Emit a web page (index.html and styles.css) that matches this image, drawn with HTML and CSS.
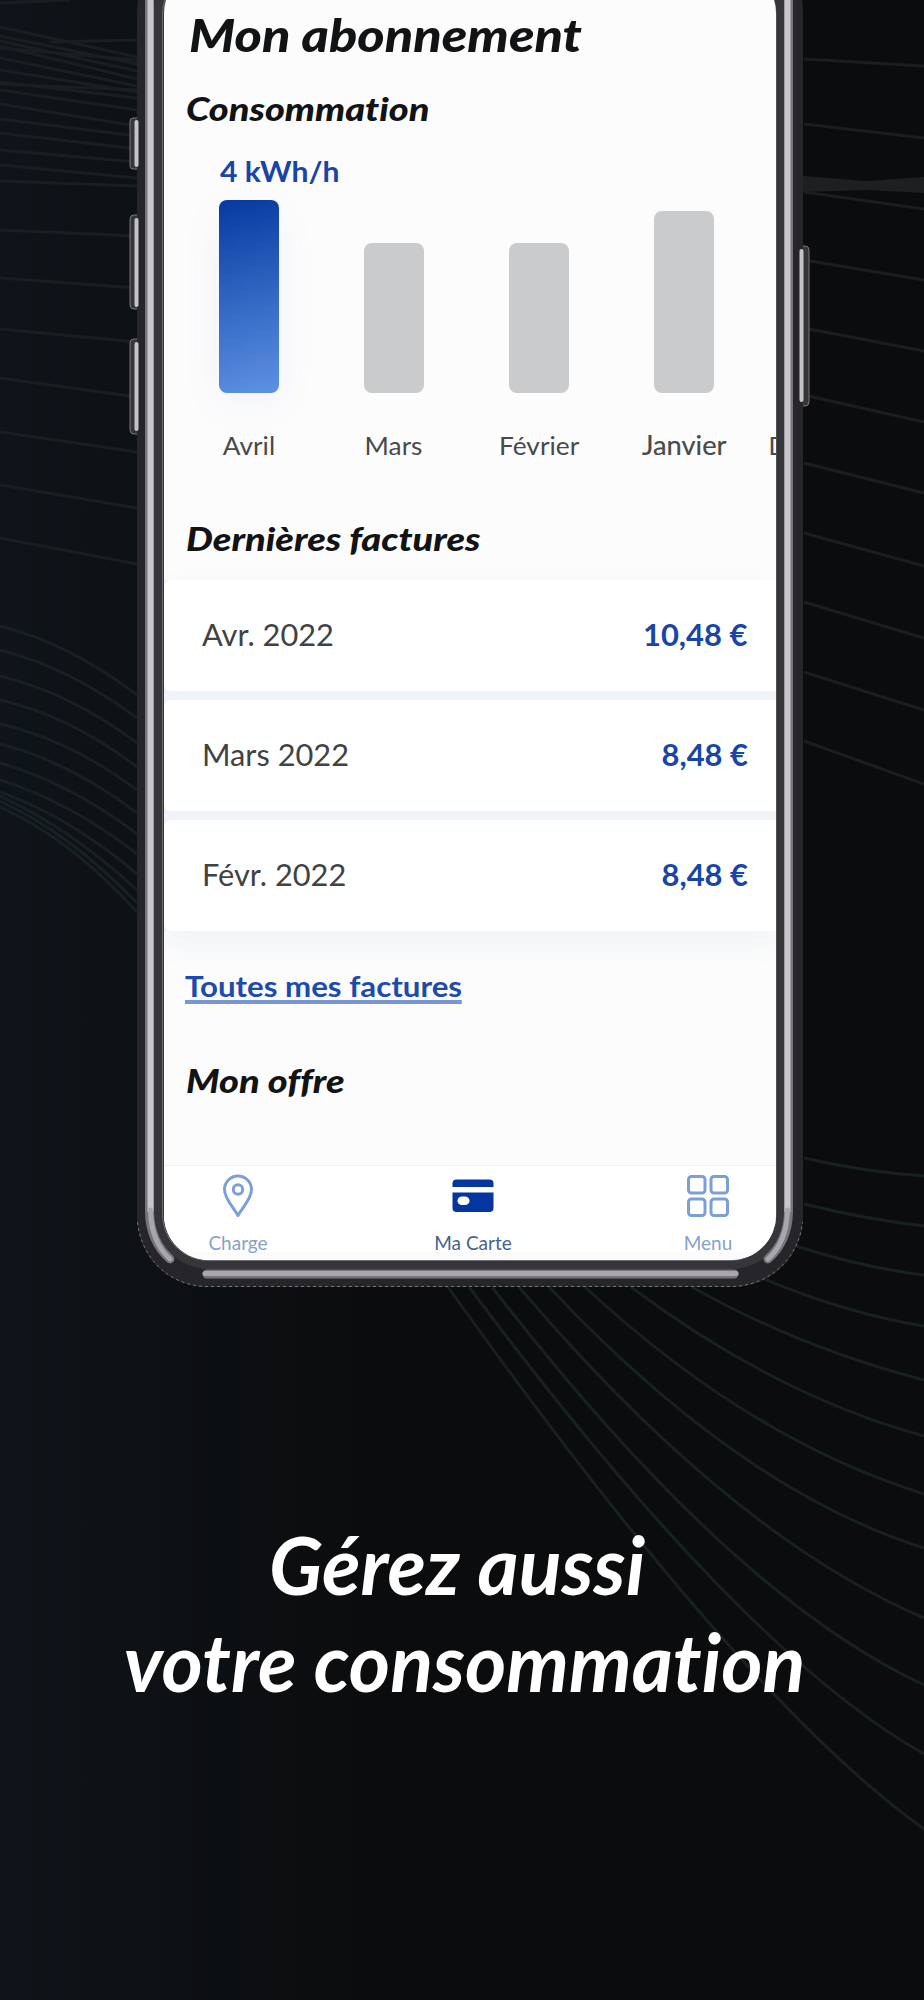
FILE: index.html
```html
<!DOCTYPE html>
<html lang="fr">
<head>
<meta charset="utf-8">
<title>Mon abonnement</title>
<link rel="stylesheet" href="styles.css">
</head>
<body>
<main class="poster">
  <svg class="waves" viewBox="0 0 924 2000" aria-hidden="true">
    <g class="wave-dim">
      <path d="M0 3L70 0M0 27L137 57M0 36L137 64M0 41L137 71M0 46L137 79M0 58L137 86M0 70L137 92M0 82L137 98M0 90L137 110M0 104L137 126M0 119L137 136M0 133L137 149M0 150L137 162M0 165L137 178M0 181L137 186M50 42L137 40M0 84L137 90M0 48L137 60"/>
      <path d="M0 230L137 236M0 278L137 288M0 329L137 342M0 378L137 397M0 432L137 452M0 485L137 508M0 538L137 564"/>
      <path d="M804 59L924 66M804 124L924 138M804 192L924 209M804 260L924 280M804 328L924 351M804 395L924 422M804 463L924 493M804 533L924 566M804 602L924 638M804 672L924 710M804 741L924 784"/>
    </g>
    <path class="wave-band" d="M803 176L867 181L924 177V193L867 190L803 192Z"/>
    <g class="wave-teal">
      <path d="M0 626Q70 644 137 695M0 650Q70 668 137 718M0 676Q70 693 137 743M0 700Q70 716 137 767M0 724Q70 740 137 790M0 744Q70 762 137 813M0 763Q70 783 137 834M0 780Q70 802 137 854M0 792Q70 817 137 874M0 796Q70 828 137 890M0 801Q70 833 137 903M0 807Q70 838 137 912"/>
      <path d="M804 1158Q864 1172 924 1176M804 1204Q864 1219 924 1226M796 1246Q864 1268 924 1275M755 1275Q840 1312 924 1326M692 1287Q800 1348 924 1380M631 1287Q775 1395 924 1436M585 1287Q750 1440 924 1494M549 1287Q740 1490 924 1548M519 1287Q730 1535 924 1618M492 1287Q730 1595 924 1685M469 1287Q740 1650 924 1754M448 1287Q742 1699 924 1829"/>
    </g>
  </svg>

  <section class="phone">
    <svg class="frame" viewBox="125 -59 690 1348" aria-hidden="true">
      <g class="side-key">
        <rect x="130" y="118" width="11" height="51" rx="3"/>
        <rect x="130" y="215" width="11" height="94" rx="4"/>
        <rect x="130" y="339" width="11" height="95" rx="4"/>
        <rect x="799" y="246" width="10" height="160" rx="4"/>
      </g>
      <rect class="body-edge" x="137" y="-59" width="666" height="1346" rx="70"/>
      <rect class="body-inner" x="153" y="-42" width="634" height="1311" rx="56"/>
      <g class="glint">
        <path d="M149.500 -10V1212C150 1236 160 1250 170 1259"/>
        <path d="M788.500 -10V1212C788 1236 778 1250 768 1259"/>
        <path d="M207 1274H734"/>
      </g>
      <g class="glint-core">
        <path d="M150.500 -10V1212"/>
        <path d="M787.500 -10V1212"/>
      </g>
      <path class="glint-tail" d="M150.500 1210C151 1236 160 1250 170 1259M787.500 1210C787 1236 778 1250 768 1259M205 1273.500H736"/>
      <path class="key-glint" d="M136.500 122V165M136.500 220V305M136.500 344V429M801.500 251V400"/>
      <path class="rim" d="M137.500 1222C141 1256 166 1284 204 1286.500H734C773 1284 799 1256 802.500 1222"/>
      <rect class="lip" x="162.500" y="-32" width="613.500" height="1292.500" rx="46"/>
    </svg>

    <div class="screen">
      <h1 class="title">Mon abonnement</h1>
      <h2 class="subtitle">Consommation</h2>

      <div class="chart">
        <div class="month current"><span class="value">4 kWh/h</span><i class="bar" style="height:193px"></i><span class="label">Avril</span></div>
        <div class="month"><i class="bar" style="height:150px"></i><span class="label">Mars</span></div>
        <div class="month"><i class="bar" style="height:150px"></i><span class="label">Février</span></div>
        <div class="month"><i class="bar" style="height:182px"></i><span class="label strong">Janvier</span></div>
        <div class="month cut"><span class="label">D</span></div>
      </div>

      <h2 class="subtitle">Dernières factures</h2>
      <ul class="bills">
        <li class="bill"><span class="date">Avr. 2022</span><b class="amount">10,48 €</b></li>
        <li class="bill"><span class="date">Mars 2022</span><b class="amount">8,48 €</b></li>
        <li class="bill"><span class="date">Févr. 2022</span><b class="amount">8,48 €</b></li>
      </ul>
      <a class="all-bills">Toutes mes factures</a>
      <h2 class="subtitle">Mon offre</h2>

      <nav class="tabs">
        <div class="tab">
          <svg class="icon" width="44" height="44" viewBox="0 0 44 44"><path class="line" d="M22 41.500C18 34 8.500 25 8.500 15.500A13.500 13.500 0 0 1 35.500 15.500C35.500 25 26 34 22 41.500Z"/><circle class="line" cx="22" cy="15.500" r="4.700"/></svg>
          <span>Charge</span>
        </div>
        <div class="tab active">
          <svg class="icon" width="44" height="44" viewBox="0 0 44 44"><path class="solid" d="M1.500 13V9.500Q1.500 5.500 5.500 5.500H38.500Q42.500 5.500 42.500 9.500V13Z"/><path class="solid" fill-rule="evenodd" d="M1.500 18.500H42.500V34Q42.500 38 38.500 38H5.500Q1.500 38 1.500 34ZM11 22.500A4.500 4.200 0 0 0 11 31H14A4.500 4.200 0 0 0 14 22.500Z"/></svg>
          <span>Ma Carte</span>
        </div>
        <div class="tab">
          <svg class="icon" width="44" height="44" viewBox="0 0 44 44"><g class="line"><rect x="2.500" y="2.500" width="16.500" height="16.500" rx="3"/><rect x="25" y="2.500" width="16.500" height="16.500" rx="3"/><rect x="2.500" y="25" width="16.500" height="16.500" rx="3"/><rect x="25" y="25" width="16.500" height="16.500" rx="3"/></g></svg>
          <span>Menu</span>
        </div>
      </nav>
    </div>
  </section>

  <p class="headline"><span class="first">Gérez aussi</span><span>votre consommation</span></p>
</main>
</body>
</html>
```
FILE: styles.css
```css
* {
  box-sizing: border-box;
  font-variant-ligatures: none !important;
}
body {
  margin: 0;
  background: #0b0c0e;
  font-family: Lato, "Open Sans", sans-serif;
}
h1, h2, ul, p { margin: 0; padding: 0; }

.poster {
  position: relative;
  width: 924px;
  height: 2000px;
  overflow: hidden;
  background: linear-gradient(90deg, #0f141a 0, #0d1013 20%, #0b0c0e 42%);
}
.waves {
  position: absolute;
  inset: 0;
  width: 924px;
  height: 2000px;
  fill: none;
  stroke-width: 3;
}
.wave-dim { stroke: #1b1e20; }
.wave-band { fill: #1d1f20; }
.wave-teal { stroke: #172022; }

/* Phone */
.phone {
  position: relative;
  width: 612px;
  height: 1260px;
  margin-left: 163.5px;
}
.frame {
  position: absolute;
  left: -38.5px;
  top: -59px;
  width: 690px;
  height: 1348px;
  fill: none;
}
.side-key { fill: #35353a; stroke: #77777c; stroke-width: 1; }
.body-edge { fill: #26252a; }
.body-inner { fill: #363539; }
.glint { stroke: #77757b; stroke-width: 9; stroke-linecap: round; }
.glint-core { stroke: #c8c6cc; stroke-width: 6; }
.glint-tail { stroke: #a9a7ad; stroke-width: 5; stroke-linecap: round; }
.key-glint { stroke: #c3c3c8; stroke-width: 4; stroke-linecap: round; }
.rim { stroke: #77757c; stroke-width: 1; stroke-dasharray: 3 3; }
.lip { stroke: #6d6c70; stroke-width: 1; }

.screen {
  position: relative;
  display: flex;
  flex-direction: column;
  align-items: flex-start;
  width: 612px;
  height: 1292px;
  top: -32px;
  padding-top: 39px;
  overflow: hidden;
  border-radius: 45px;
  background: #fcfcfc;
  color: #111315;
}
.title {
  height: 81px;
  margin-left: 25px;
  font: italic 900 46px/55px Lato, sans-serif;
  white-space: nowrap;
  transform: scaleX(1.135);
  transform-origin: left;
}
.subtitle {
  height: 40px;
  margin-left: 22px;
  font: italic 900 33px/40px Lato, sans-serif;
  white-space: nowrap;
  transform: scaleX(1.15);
  transform-origin: left;
}

/* Consumption chart */
.chart {
  display: flex;
  align-items: flex-end;
  gap: 1px;
  width: 760px;
  height: 332px;
  margin: 0 0 58px 13.5px;
}
.month {
  display: flex;
  flex: none;
  flex-direction: column;
  align-items: center;
  width: 144px;
}
.bar {
  width: 60px;
  border-radius: 8px;
  background: #cacbcd;
}
.current .bar {
  background: linear-gradient(165deg, #083ba1 2%, #5b90e2 98%);
  box-shadow: 0 12px 44px rgba(60, 110, 200, .06);
}
.value {
  align-self: flex-start;
  height: 47px;
  margin-left: 43px;
  color: #1745a8;
  font: 700 29px/35px Lato, sans-serif;
  white-space: nowrap;
  transform: scaleX(1.037);
  transform-origin: left;
}
.label {
  margin-top: 37px;
  color: #47494b;
  font-size: 25px;
  line-height: 30px;
  transform: scaleX(1.05);
}
.label.strong { font-size: 26px; -webkit-text-stroke: .2px #47494b; }
.cut { align-items: flex-start; padding-left: 11.5px; }
.cut .label { transform: none; }

/* Bills */
.bills {
  display: grid;
  gap: 9px;
  width: 612px;
  margin: 22px 0 37px;
  list-style: none;
  background: #f0f4f9;
  box-shadow: 0 12px 30px rgba(40, 80, 150, .06);
}
.bill {
  display: flex;
  align-items: center;
  justify-content: space-between;
  height: 111px;
  padding: 0 28px 3px 38.500px;
  background: #fff;
  border-radius: 8px 0 0 8px;
  font-size: 30px;
  line-height: 36px;
}
.date { color: #404244; transform: scaleX(1.025); transform-origin: left; }
.amount { color: #1745a8; transform: scaleX(1.03); transform-origin: right; }
.all-bills {
  height: 36px;
  margin: 0 0 56px 21.5px;
  border-bottom: 4px solid #7895d4;
  color: #1c4bb0;
  font: 700 29px/35px Lato, sans-serif;
  transform: scaleX(1.077);
  transform-origin: left;
}

/* Tab bar */
.tabs {
  display: flex;
  justify-content: space-between;
  width: 612px;
  height: 95px;
  margin-top: auto;
  padding: 8px 17px 0 24px;
  border-top: 1px solid #f0f0f1;
  background: #fff;
  box-shadow: inset 0 -9px 0 -1px #fbfbfb;
}
.tab {
  display: flex;
  flex-direction: column;
  align-items: center;
  gap: 13px;
  width: 101px;
  color: #86a2c9;
  font-size: 19px;
  line-height: 23px;
}
.tab.active { color: #45628f; }
.icon { flex: none; }
.line { fill: none; stroke: #7c9fd8; stroke-width: 3; stroke-linejoin: round; }
.solid { fill: #0535a0; }

/* Headline */
.headline {
  position: relative;
  display: flex;
  flex-direction: column;
  align-items: center;
  margin-top: 256px;
  padding-left: 5px;
  color: #fff;
  font: italic 700 80px/97px Lato, sans-serif;
  transform: scaleX(.988);
}
.first { padding-right: 15px; }
```
